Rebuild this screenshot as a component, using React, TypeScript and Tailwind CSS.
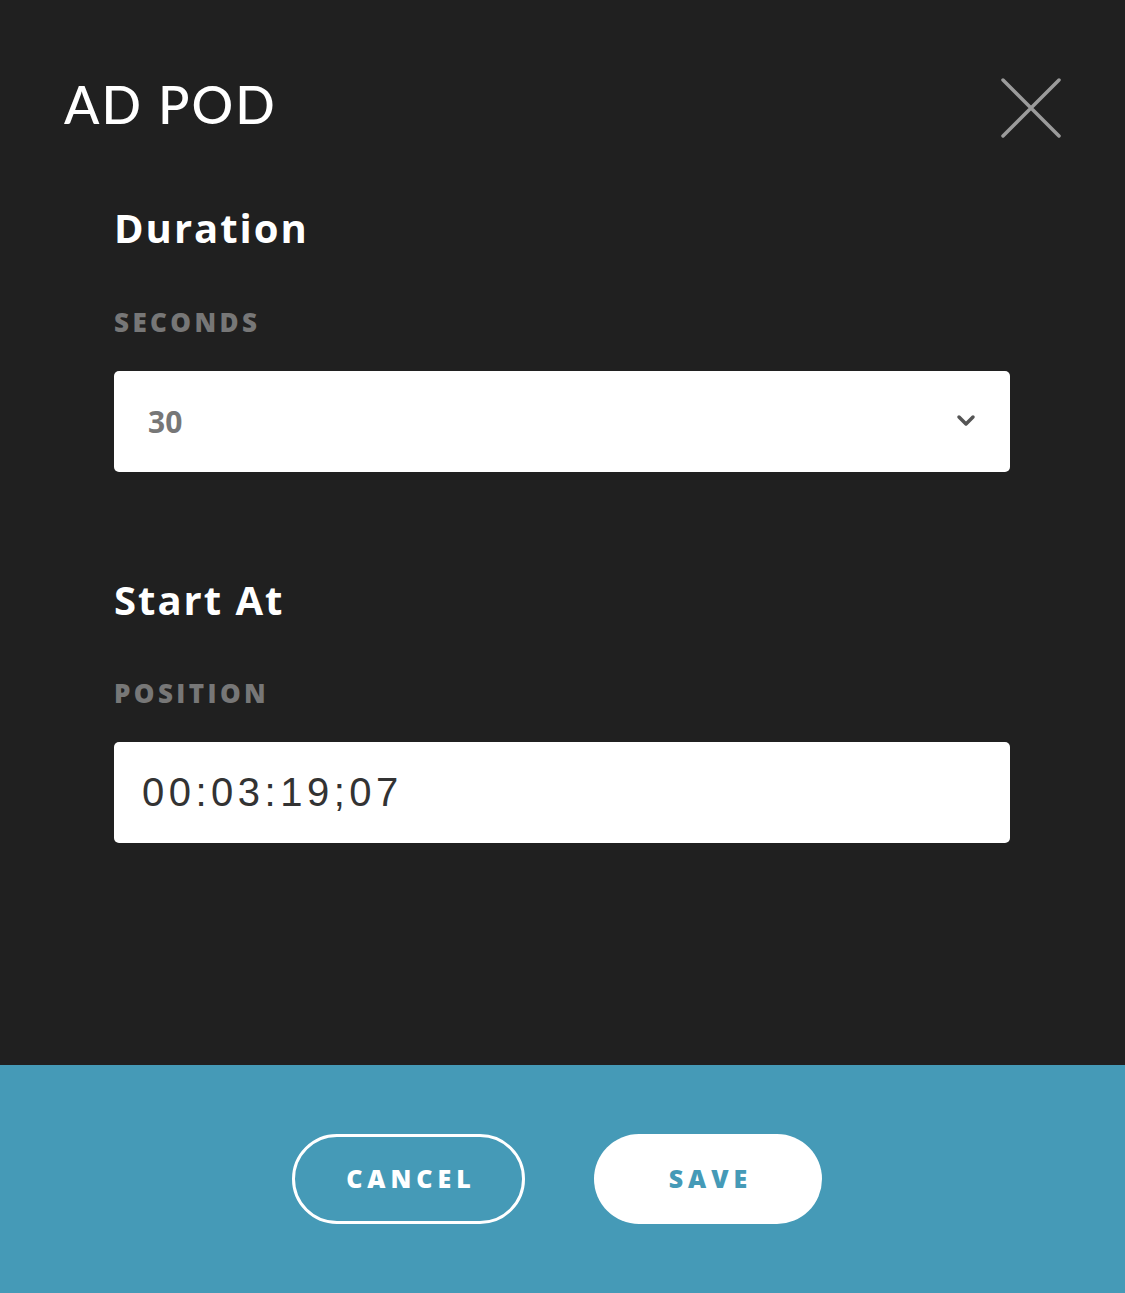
import { useState } from 'react';

const font = { fontFamily: 'Lato, "Open Sans", sans-serif' };
const heavy = { fontFamily: '"Open Sans", Lato, sans-serif' };

// Modal for editing an ad pod: duration select, start position, cancel/save footer.
export default function App() {
  const [seconds, setSeconds] = useState('30');
  const [position, setPosition] = useState('00:03:19;07');

  return (
    <div className="flex min-h-[1293px] w-full flex-col bg-[#202020]" style={font}>
      <div className="flex-1">
        <div className="flex items-start justify-between pl-[64px] pr-[64px] pt-[78px]">
          <h1 className="text-[52px] font-medium leading-none tracking-[2px] text-white">AD POD</h1>
          <button className="h-[60px] w-[60px] text-[#9b9b9b]" aria-label="Close">
            <svg viewBox="0 0 60 60" className="h-full w-full" fill="none" stroke="currentColor" strokeWidth="3.5" strokeLinecap="round">
              <path d="M2 2 L58 58 M58 2 L2 58" />
            </svg>
          </button>
        </div>

        <div className="pl-[114px] pr-[115px]" style={heavy}>
          <h2 className="mt-[70px] text-[40px] font-bold leading-none tracking-[0.05em] text-white">Duration</h2>
          <div className="mt-[61px] text-[26px] font-extrabold uppercase leading-none tracking-[0.13em] text-[#777777]">Seconds</div>
          <div className="relative mt-[36px]">
            <select
              value={seconds}
              onChange={(e) => setSeconds(e.target.value)}
              className="h-[101px] w-full appearance-none rounded-[5px] bg-white pl-[34px] text-[30px] font-bold text-[#777777] outline-none"
            >
              <option value="15">15</option>
              <option value="30">30</option>
              <option value="60">60</option>
            </select>
            <svg viewBox="0 0 20 14" className="pointer-events-none absolute right-[34px] top-[43px] h-[14px] w-[20px] text-[#555555]" fill="none" stroke="currentColor" strokeWidth="3.5" strokeLinecap="round" strokeLinejoin="round">
              <path d="M3 3 L10 10 L17 3" />
            </svg>
          </div>

          <h2 className="mt-[108px] text-[40px] font-bold leading-none tracking-[0.05em] text-white">Start At</h2>
          <div className="mt-[60px] text-[26px] font-extrabold uppercase leading-none tracking-[0.13em] text-[#777777]">Position</div>
          <input
            value={position}
            onChange={(e) => setPosition(e.target.value)}
            className="mt-[36px] h-[101px] w-full rounded-[5px] bg-white pl-[28px] text-[40px] tracking-[4.5px] text-[#333333] outline-none"
            style={{ fontFamily: '"Liberation Sans", Arial, sans-serif' }}
          />
        </div>
      </div>

      <div className="flex h-[228px] items-center justify-center gap-[69px] bg-[#459ab7] pr-[11px]" style={heavy}>
        <button className="h-[90px] w-[233px] rounded-full border-[3px] border-white pl-[5px] text-[25px] font-extrabold uppercase tracking-[0.2em] text-white">
          Cancel
        </button>
        <button className="h-[90px] w-[228px] rounded-full bg-white pl-[5px] text-[25px] font-extrabold uppercase tracking-[0.2em] text-[#459ab7]">
          Save
        </button>
      </div>
    </div>
  );
}
